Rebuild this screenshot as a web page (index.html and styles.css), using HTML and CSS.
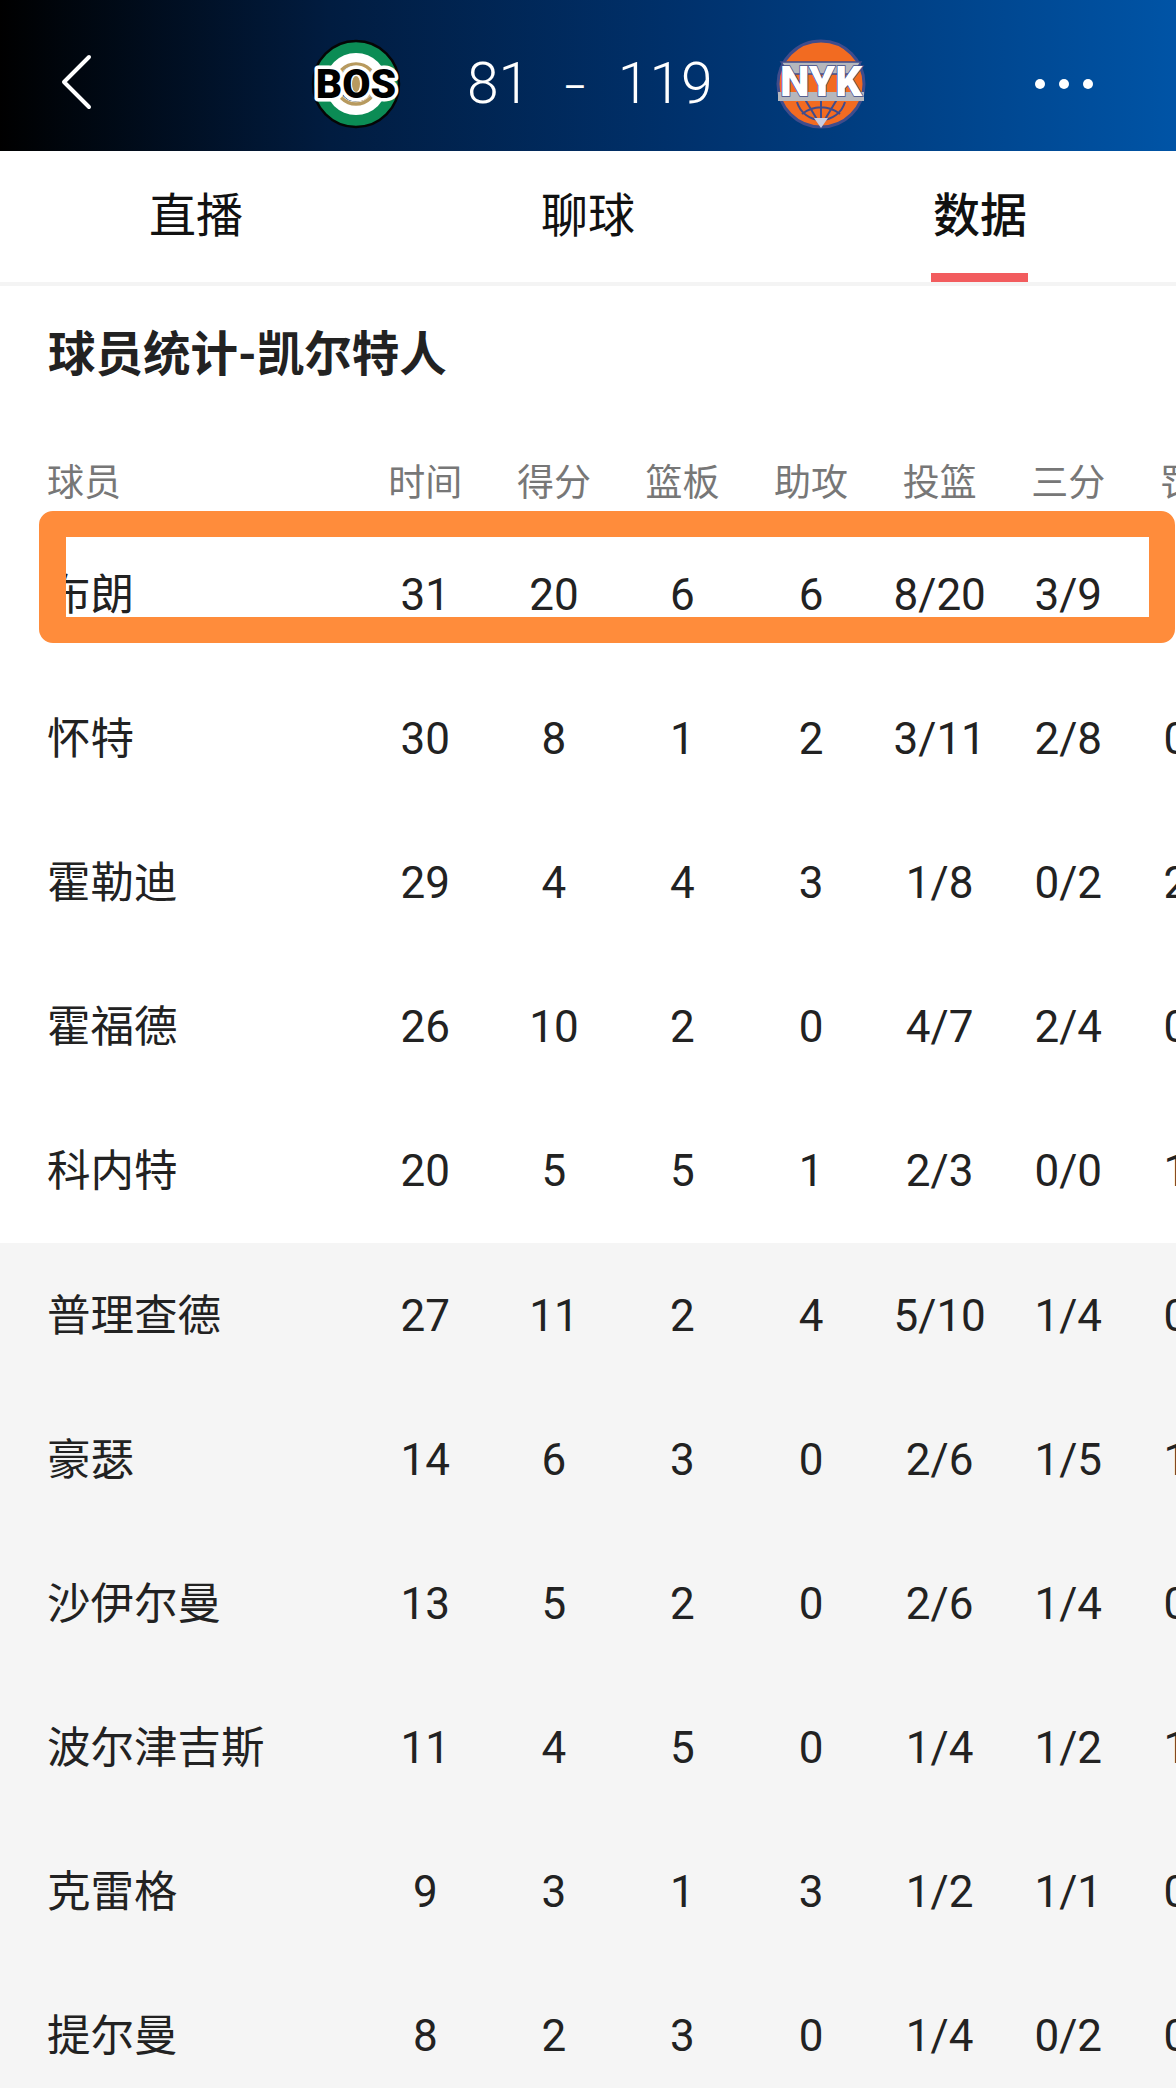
FILE: index.html
```html
<!DOCTYPE html>
<html lang="zh-CN">
<head>
    <meta charset="UTF-8">
    <title>球员统计</title>
    <link rel="stylesheet" href="styles.css">
</head>
<body>
    <div class="page">
        <header class="score-bar">
            <svg class="back" viewBox="0 0 32 56" width="32" height="56">
                <path d="M29 3 L4 28 L29 53" fill="none" stroke="#fff" stroke-width="4" stroke-linecap="round" stroke-linejoin="round"/>
            </svg>
            <svg class="logo logo-bos" viewBox="0 0 96 92" width="96" height="92">
                <circle cx="48" cy="46" r="43" fill="#0b8c55" stroke="#050505" stroke-width="2.5"/>
                <circle cx="48" cy="46" r="31" fill="#fff"/>
                <circle cx="48" cy="46" r="20" fill="none" stroke="#b79a5f" stroke-width="3.5"/>
                <circle cx="48" cy="46" r="17" fill="none" stroke="#2a2013" stroke-width="1.5"/>
                <text class="logo-text-bos plate" x="48" y="60" text-anchor="middle">BOS</text>
                <text class="logo-text-bos" x="48" y="60" text-anchor="middle">BOS</text>
                <ellipse cx="48" cy="46" rx="4" ry="8" fill="#b79a5f"/>
            </svg>
            <div class="score">
                <span>81</span>
                <span class="dash">–</span>
                <span>119</span>
            </div>
            <svg class="logo logo-nyk" viewBox="0 0 92 92" width="92" height="92">
                <circle cx="46" cy="46" r="43" fill="#f26b21" stroke="#3f4c8c" stroke-width="3"/>
                <path d="M6 24 H86 L78 36 H14 Z" fill="#b5b7bd" stroke="#3f4c8c" stroke-width="1.5"/>
                <path d="M46 88 L28 58 M46 88 L64 58 M22 64 A25 25 0 0 0 70 64 M46 62 V84 M27 76 A30 30 0 0 1 65 76" fill="none" stroke="#3f4c8c" stroke-width="2"/>
                <path d="M39 80 H53 L46 90 Z" fill="#c9cde0"/>
                <rect x="3" y="54" width="86" height="9" fill="#b5b7bd"/>
                <text class="logo-text-nyk" x="46" y="58" text-anchor="middle">NYK</text>
            </svg>
            <div class="more">
                <i></i><i></i><i></i>
            </div>
        </header>

        <nav class="tabs">
            <div class="tab">直播</div>
            <div class="tab">聊球</div>
            <div class="tab active">数据</div>
        </nav>

        <h2 class="section-title">球员统计-凯尔特人</h2>

        <div class="row head">
            <div class="name">球员</div>
            <div>时间</div><div>得分</div><div>篮板</div><div>助攻</div><div>投篮</div><div>三分</div><div>罚球</div>
        </div>

        <div class="row">
            <div class="name">布朗</div>
            <div>31</div><div>20</div><div>6</div><div>6</div><div>8/20</div><div>3/9</div><div class="cut"></div>
            <div class="highlight"></div>
        </div>
        <div class="row">
            <div class="name">怀特</div>
            <div>30</div><div>8</div><div>1</div><div>2</div><div>3/11</div><div>2/8</div><div class="cut">0</div>
        </div>
        <div class="row">
            <div class="name">霍勒迪</div>
            <div>29</div><div>4</div><div>4</div><div>3</div><div>1/8</div><div>0/2</div><div class="cut">2</div>
        </div>
        <div class="row">
            <div class="name">霍福德</div>
            <div>26</div><div>10</div><div>2</div><div>0</div><div>4/7</div><div>2/4</div><div class="cut">0</div>
        </div>
        <div class="row">
            <div class="name">科内特</div>
            <div>20</div><div>5</div><div>5</div><div>1</div><div>2/3</div><div>0/0</div><div class="cut">1</div>
        </div>

        <div class="bench">
            <div class="row">
                <div class="name">普理查德</div>
                <div>27</div><div>11</div><div>2</div><div>4</div><div>5/10</div><div>1/4</div><div class="cut">0</div>
            </div>
            <div class="row">
                <div class="name">豪瑟</div>
                <div>14</div><div>6</div><div>3</div><div>0</div><div>2/6</div><div>1/5</div><div class="cut">1</div>
            </div>
            <div class="row">
                <div class="name">沙伊尔曼</div>
                <div>13</div><div>5</div><div>2</div><div>0</div><div>2/6</div><div>1/4</div><div class="cut">0</div>
            </div>
            <div class="row">
                <div class="name">波尔津吉斯</div>
                <div>11</div><div>4</div><div>5</div><div>0</div><div>1/4</div><div>1/2</div><div class="cut">1</div>
            </div>
            <div class="row">
                <div class="name">克雷格</div>
                <div>9</div><div>3</div><div>1</div><div>3</div><div>1/2</div><div>1/1</div><div class="cut">0</div>
            </div>
            <div class="row">
                <div class="name">提尔曼</div>
                <div>8</div><div>2</div><div>3</div><div>0</div><div>1/4</div><div>0/2</div><div class="cut">0</div>
            </div>
        </div>
    </div>
</body>
</html>
```

FILE: styles.css
```css
html, body { margin: 0; padding: 0; background-color: #fff; }
body { font-family: Roboto, "Noto Sans CJK SC", sans-serif; color: #222; }
.page { width: 1176px; height: 2088px; overflow: hidden; }

/* score bar */
.score-bar { display: flex; align-items: center; height: 151px; padding-left: 60px; background: linear-gradient(90deg, #000 0%, #011c40 28%, #00316c 58%, #0054a6 100%); color: #fff; box-sizing: border-box; }
.back { flex: none; margin-top: 13px; }
.logo { flex: none; margin-top: 17px; }
.logo-bos { margin-left: 216px; }
.logo-nyk { margin-left: 62px; }
.logo-text-bos { font-family: Roboto, sans-serif; font-size: 41px; font-weight: 900; fill: #000; }
.plate { stroke: #fff; stroke-width: 7px; stroke-linejoin: round; }
.logo-text-nyk { font-family: Roboto, sans-serif; font-size: 42px; font-weight: 900; fill: #fff; stroke: #3f4c8c; stroke-width: 1.5px; paint-order: stroke; }
.score { display: flex; align-items: center; margin-left: 63px; margin-top: 16px; font-size: 57px; font-weight: 300; }
.dash { margin: 0 31px 0 33px; font-size: 36px; font-weight: 400; padding-top: 8px; }
.more { display: flex; gap: 14px; margin-left: 168px; margin-top: 16px; }
.more i { display: block; width: 10px; height: 10px; border-radius: 50%; background-color: #fff; }

/* tabs */
.tabs { display: grid; grid-template-columns: repeat(3, 392px); height: 135px; box-sizing: border-box; border-bottom: 4px solid #f4f4f4; font-family: "Noto Sans CJK SC", sans-serif; font-size: 47px; color: #111; }
.tab { display: flex; justify-content: center; padding-top: 28px; line-height: 66px; }
.tab.active { position: relative; font-weight: 500; }
.tab.active::after { content: ""; position: absolute; left: 147px; bottom: 0; width: 97px; height: 9px; background-color: #f25c5e; }

.section-title { margin: 41px 0 55px; padding-left: 48px; font-family: Roboto, "Noto Sans CJK SC", sans-serif; font-size: 47.5px; line-height: 56px; font-weight: 700; color: #222; }

/* stats table */
.row { position: relative; display: grid; grid-template-columns: 361px repeat(7, 128.6px); align-items: center; width: 1261px; height: 144.1px; font-size: 44px; text-align: center; }
.row .name { padding-left: 47px; padding-bottom: 7px; text-align: left; font-family: "Noto Sans CJK SC", sans-serif; font-size: 43.5px; }
.row .cut { padding-left: 31px; text-align: left; }
.row.head { height: 85px; padding-bottom: 2px; box-sizing: border-box; font-family: "Noto Sans CJK SC", sans-serif; font-size: 37px; color: #777; }
.row.head .name { font-size: 37px; padding-bottom: 0; }
.bench { background-color: #f5f5f5; }

.highlight { position: absolute; left: 39px; top: -12px; width: 1136px; height: 132px; box-sizing: border-box; border: 26px solid #ff8c3b; border-left-width: 27px; border-radius: 14px; }
```
